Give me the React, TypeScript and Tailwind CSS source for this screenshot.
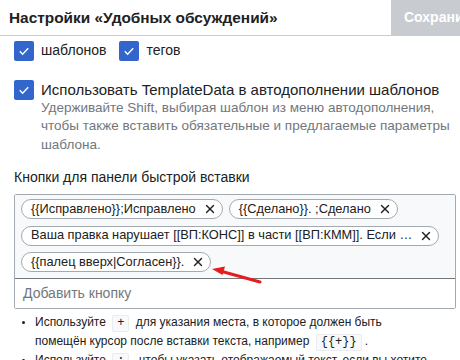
import { X } from "lucide-react";

const font = { fontFamily: '"Liberation Sans", Arial, sans-serif' };

function Check({ checked = true }: { checked?: boolean }) {
  return (
    <span className="w-5 h-5 shrink-0 rounded-[2px] bg-[#3366cc] flex items-center justify-center">
      {checked && (
        <svg width="14" height="14" viewBox="0 0 20 20" fill="none">
          <path d="M4 10.5l4 4 8-8.5" stroke="white" strokeWidth="2" />
        </svg>
      )}
    </span>
  );
}

function Tag({ label }: { label: string }) {
  return (
    <span className="h-5 flex items-center rounded-full border border-[#a2a9b1] bg-white pl-[9px] pr-[5px] text-[12.8px] text-[#202122] leading-none whitespace-nowrap">
      {label}
      <X className="ml-[7px] w-[14px] h-[14px] text-[#202122]" strokeWidth={2.3} />
    </span>
  );
}

function Code({ children }: { children: string }) {
  return (
    <code className="inline-block px-[4px] mx-[3px] leading-[15px] bg-[#f8f9fa] border border-[#eaecf0] rounded-[2px] text-[12px] text-[#202122] font-['Liberation_Mono',monospace]">
      {children}
    </code>
  );
}

export default function App() {
  const tags = [
    "{{Исправлено}};Исправлено",
    "{{Сделано}}. ;Сделано",
    "Ваша правка нарушает [[ВП:КОНС]] в части [[ВП:КММ]]. Если …",
    "{{палец вверх|Согласен}}.",
  ];

  return (
    <div style={font} className="w-[460px] h-[360px] overflow-hidden bg-white text-[#202122] relative">
      {/* Header */}
      <div className="h-9 flex items-stretch border-b border-[#c8ccd1]">
        <div className="flex-1 pl-[9px] flex items-center text-[15.4px] font-bold">
          Настройки «Удобных обсуждений»
        </div>
        <div className="w-[69px] bg-[#c8ccd1] pl-[13px] flex items-center overflow-hidden whitespace-nowrap text-white text-[14px] font-bold">
          Сохранить
        </div>
      </div>

      <div className="pl-[14px] pr-[4px] text-[14px]">
        {/* Checkbox row */}
        <div className="mt-[4px] flex items-center">
          <Check />
          <span className="ml-[7px] mr-[13px]">шаблонов</span>
          <Check />
          <span className="ml-[7px]">тегов</span>
        </div>

        {/* TemplateData */}
        <div className="mt-[19px] flex items-start">
          <Check />
          <div className="ml-[7px] -mt-[0.5px]">
            <div className="text-[15px] leading-[19px]">Использовать TemplateData в автодополнении шаблонов</div>
            <div className="text-[13.5px] leading-[18.5px] text-[#72777d] whitespace-nowrap">
              Удерживайте Shift, выбирая шаблон из меню автодополнения,
              <br />
              чтобы также вставить обязательные и предлагаемые параметры
              <br />
              шаблона.
            </div>
          </div>
        </div>

        {/* Buttons field */}
        <div className="mt-[14px] leading-[18px]">Кнопки для панели быстрой вставки</div>
        <div className="mt-[8px] border border-[#a2a9b1] rounded-[2px]">
          <div className="bg-[#f8f9fa] px-[6px] pt-[4px] pb-[6px] flex flex-wrap gap-x-[6px] gap-y-[6.5px]">
            {tags.map((t) => (
              <Tag key={t} label={t} />
            ))}
          </div>
          <div className="h-[30px] border-t border-[#72777d] bg-white flex items-center pl-[8px] text-[#72777d]">
            Добавить кнопку
          </div>
        </div>

        {/* Notes */}
        <ul className="mt-[4px] pl-[21px] list-disc text-[12px] leading-[19px] text-[#202122] marker:text-[10px]">
          <li>
            Используйте <Code>+</Code> для указания места, в которое должен быть
            <br />
            помещён курсор после вставки текста, например <Code>{"{{+}}"}</Code>.
          </li>
          <li>
            Используйте <Code>;</Code>, чтобы указать отображаемый текст, если вы хотите, чтобы он отличался от вставляемого.
          </li>
        </ul>
      </div>

      {/* Red arrow annotation */}
      <svg className="absolute left-[208px] top-[262px]" width="60" height="26" viewBox="0 0 60 26">
        <path d="M52 20 L14 9.5" stroke="#e41e1e" strokeWidth="3" strokeLinecap="round" />
        <path d="M4 7 L17 4.5 L14.5 13 Z" fill="#e41e1e" />
      </svg>
    </div>
  );
}
